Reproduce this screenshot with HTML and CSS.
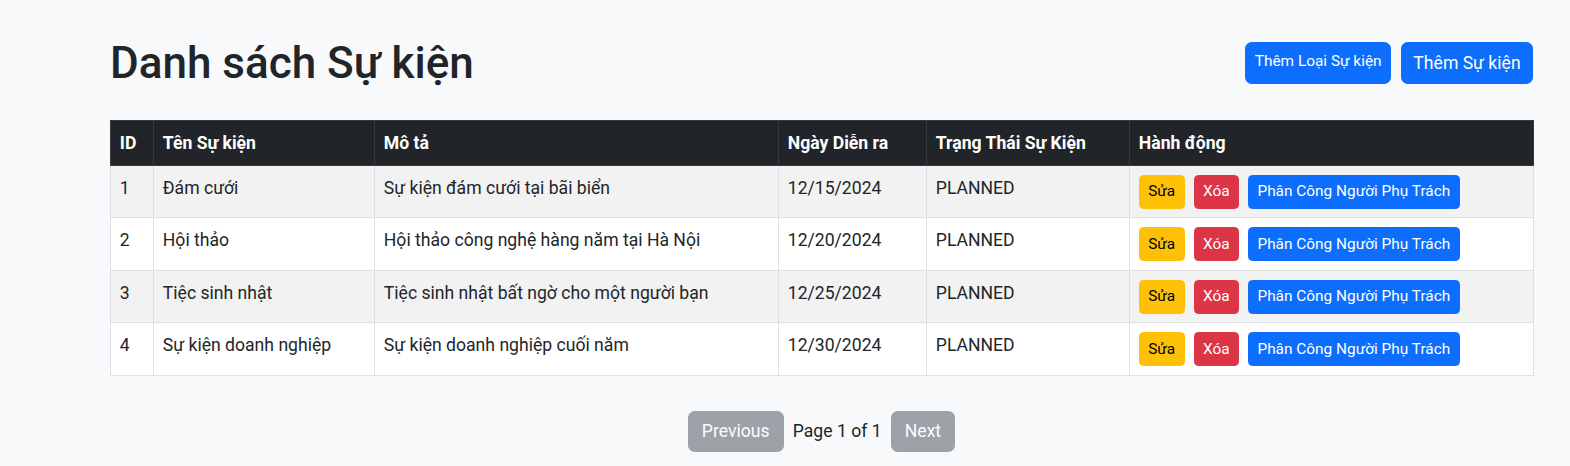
FILE: index.html
```html
<!DOCTYPE html>
<html lang="vi">
<head>
<meta charset="utf-8">
<title>Danh sách Sự kiện</title>
<link rel="stylesheet" href="styles.css">
</head>
<body>
<div class="page">
  <div class="page-header">
    <h1 class="title">Danh sách Sự kiện</h1>
    <div class="header-actions">
      <button class="btn btn-primary btn-type">Thêm Loại Sự kiện</button>
      <button class="btn btn-primary btn-add">Thêm Sự kiện</button>
    </div>
  </div>

  <table class="events">
    <colgroup>
      <col class="c-id"><col class="c-name"><col class="c-desc"><col class="c-date"><col class="c-status"><col class="c-act">
    </colgroup>
    <thead>
      <tr>
        <th>ID</th>
        <th>Tên Sự kiện</th>
        <th>Mô tả</th>
        <th>Ngày Diễn ra</th>
        <th>Trạng Thái Sự Kiện</th>
        <th>Hành động</th>
      </tr>
    </thead>
    <tbody>
      <tr>
        <td>1</td><td>Đám cưới</td><td>Sự kiện đám cưới tại bãi biển</td><td>12/15/2024</td><td>PLANNED</td>
        <td><div class="actions"><button class="btn btn-sm btn-warning">Sửa</button><button class="btn btn-sm btn-danger">Xóa</button><button class="btn btn-sm btn-primary">Phân Công Người Phụ Trách</button></div></td>
      </tr>
      <tr>
        <td>2</td><td>Hội thảo</td><td>Hội thảo công nghệ hàng năm tại Hà Nội</td><td>12/20/2024</td><td>PLANNED</td>
        <td><div class="actions"><button class="btn btn-sm btn-warning">Sửa</button><button class="btn btn-sm btn-danger">Xóa</button><button class="btn btn-sm btn-primary">Phân Công Người Phụ Trách</button></div></td>
      </tr>
      <tr>
        <td>3</td><td>Tiệc sinh nhật</td><td>Tiệc sinh nhật bất ngờ cho một người bạn</td><td>12/25/2024</td><td>PLANNED</td>
        <td><div class="actions"><button class="btn btn-sm btn-warning">Sửa</button><button class="btn btn-sm btn-danger">Xóa</button><button class="btn btn-sm btn-primary">Phân Công Người Phụ Trách</button></div></td>
      </tr>
      <tr>
        <td>4</td><td>Sự kiện doanh nghiệp</td><td>Sự kiện doanh nghiệp cuối năm</td><td>12/30/2024</td><td>PLANNED</td>
        <td><div class="actions"><button class="btn btn-sm btn-warning">Sửa</button><button class="btn btn-sm btn-danger">Xóa</button><button class="btn btn-sm btn-primary">Phân Công Người Phụ Trách</button></div></td>
      </tr>
    </tbody>
  </table>

  <div class="pagination">
    <button class="btn btn-secondary" disabled>Previous</button>
    <span class="page-info">Page 1 of 1</span>
    <button class="btn btn-secondary" disabled>Next</button>
  </div>
</div>
</body>
</html>
```
FILE: styles.css
```css
* { box-sizing: border-box; }
html, body { margin: 0; padding: 0; }
body {
  background: #f8f9fa;
  color: #212529;
  font-family: Roboto, "Noto Sans", "Liberation Sans", sans-serif;
  font-size: 17.6px;
  line-height: 1.5;
}
.page {
  width: 1423px;
  margin-left: 110px;
  padding-top: 39px;
}
.page-header {
  display: flex;
  justify-content: space-between;
  align-items: center;
  height: 48px;
  margin-bottom: 33px;
}
.title {
  margin: 0;
  font-size: 44px;
  font-weight: 500;
  line-height: 48px;
}
.header-actions {
  display: flex;
  gap: 10px;
  align-items: center;
}
.btn {
  display: inline-block;
  font-family: inherit;
  font-size: 17.6px;
  line-height: 26.4px;
  padding: 6.6px 13.2px;
  border: 1px solid transparent;
  border-radius: 6.6px;
  cursor: pointer;
  color: #fff;
  white-space: nowrap;
}
.btn-add { padding-left: 11.4px; padding-right: 11.4px; }
.btn-type {
  font-size: 15.4px;
  line-height: 22px;
  padding: 6.6px 8.4px 11px;
}
.btn-primary { background: #0d6efd; border-color: #0d6efd; }
.btn-warning { background: #ffc107; border-color: #ffc107; color: #000; }
.btn-danger { background: #dc3545; border-color: #dc3545; }
.btn-secondary { background: #6c757d; border-color: #6c757d; }
.btn:disabled { opacity: .65; cursor: default; }
.btn-sm {
  font-size: 15.4px;
  line-height: 23.1px;
  padding: 4.4px 8.4px;
  border-radius: 4.4px;
}

.events {
  width: 1423px;
  border-collapse: collapse;
  table-layout: fixed;
  background: #fff;
}
.c-id { width: 43px; }
.c-name { width: 221px; }
.c-desc { width: 404px; }
.c-date { width: 148px; }
.c-status { width: 203px; }
.c-act { width: 404px; }
.events th, .events td {
  padding: 8.8px;
  text-align: left;
  vertical-align: top;
  border: 1px solid #dee2e6;
}
.events th {
  background: #212529;
  color: #fff;
  font-weight: 700;
  border-color: #373b3e;
}
.events tbody tr:nth-child(odd) td { background: #f2f2f2; }
.actions {
  display: flex;
  gap: 9px;
}

.pagination {
  display: flex;
  justify-content: center;
  align-items: center;
  gap: 9px;
  margin-top: 35px;
}
```
